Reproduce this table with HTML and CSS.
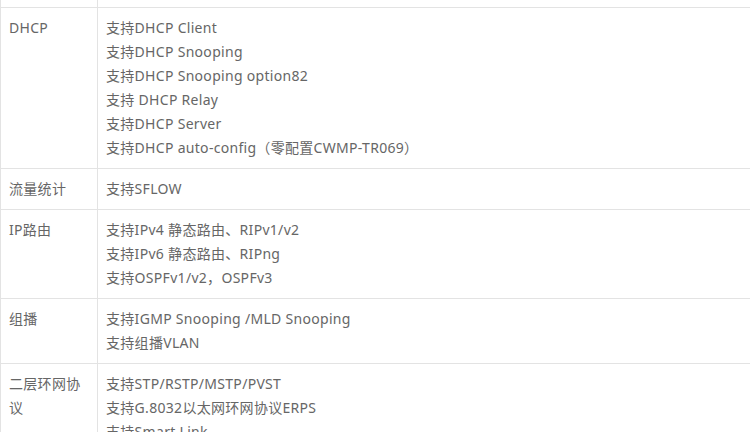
FILE: index.html
```html
<!DOCTYPE html>
<html lang="zh-CN">
<head>
<meta charset="utf-8">
<link rel="stylesheet" href="styles.css">
</head>
<body>
<table class="spec">
  <tr class="stub"><td class="k"></td><td class="v"></td></tr>
  <tr>
    <td class="k">DHCP</td>
    <td class="v">支持DHCP Client<br>支持DHCP Snooping<br>支持DHCP Snooping option82<br>支持 DHCP Relay<br>支持DHCP Server<br>支持DHCP auto-config（零配置CWMP-TR069）</td>
  </tr>
  <tr>
    <td class="k">流量统计</td>
    <td class="v">支持SFLOW</td>
  </tr>
  <tr>
    <td class="k">IP路由</td>
    <td class="v">支持IPv4 静态路由、RIPv1/v2<br>支持IPv6 静态路由、RIPng<br>支持OSPFv1/v2，OSPFv3</td>
  </tr>
  <tr>
    <td class="k">组播</td>
    <td class="v">支持IGMP Snooping /MLD Snooping<br>支持组播VLAN</td>
  </tr>
  <tr>
    <td class="k">二层环网协议</td>
    <td class="v">支持STP/RSTP/MSTP/PVST<br>支持G.8032以太网环网协议ERPS<br>支持Smart Link</td>
  </tr>
</table>
</body>
</html>
```
FILE: styles.css
```css
html, body {
  margin: 0;
  padding: 0;
  overflow: hidden;
  background: #fff;
}
.spec {
  width: 770px;
  border-collapse: collapse;
  font-family: "Noto Sans", "Noto Sans CJK SC", "Microsoft YaHei", sans-serif;
  font-size: 14px;
  line-height: 24px;
  letter-spacing: 0.3px;
  color: #666;
}
.spec td {
  border: 1px solid #e3e3e3;
  padding: 8px;
  vertical-align: top;
  text-align: left;
}
.spec .k {
  width: 80px;
}
.spec .stub td {
  border-top: none;
  padding: 0;
  height: 7px;
  line-height: 0;
}
```
